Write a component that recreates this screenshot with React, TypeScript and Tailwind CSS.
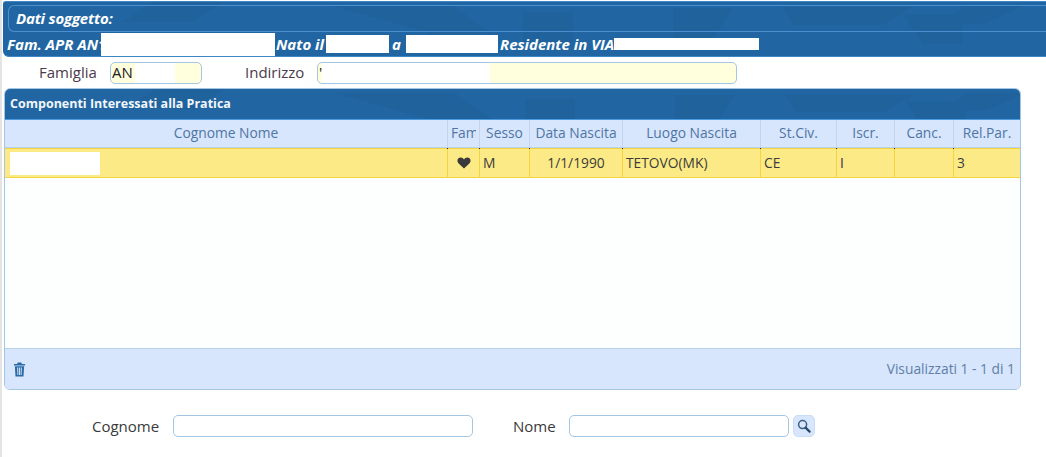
const columns = [
  { label: "Cognome Nome", width: "w-[443px]" },
  { label: "Sesso", width: "w-[50px]" },
  { label: "Data Nascita", width: "w-[93px]" },
  { label: "Luogo Nascita", width: "w-[138px]" },
  { label: "St.Civ.", width: "w-[76px]" },
  { label: "Iscr.", width: "w-[58px]" },
  { label: "Canc.", width: "w-[59px]" },
  { label: "Rel.Par.", width: "flex-1" },
];

const headCell =
  "flex shrink-0 items-center justify-center overflow-hidden whitespace-nowrap border-r border-[#c3d5ee] last:border-r-0";

/** Faint darker shapes that sit behind the blue title bars. */
function BarPattern() {
  return (
    <svg className="absolute inset-0 h-full w-full" aria-hidden>
      <g fill="#1d5a8f" opacity="0.3">
        <path d="M150 0h70l-30 20h-70z" />
        <path d="M330 4h120l40 28h-60z" />
        <path d="M670 6h60l-20 30h-40z" />
        <path d="M780 5h130l-30 18h-90z" />
        <path d="M900 12h60v30h-40z" />
        <path d="M960 4h60l-40 18h-40z" />
        <path d="M520 10h50v30h-50z" />
      </g>
    </svg>
  );
}

function TrashIcon() {
  return (
    <svg width="13" height="15" viewBox="0 0 14 15" preserveAspectRatio="none" aria-hidden>
      <path d="M5 0.6h4l0.6 1.3H13v1.5H1V1.9h3.4z" fill="#2a6ba6" />
      <path
        d="M2 4.2h10l-0.7 10.2H2.7zM4.5 5.6l0.3 7.5h1L5.6 5.6zM6.5 5.6v7.5h1V5.6zM8.4 5.6l-0.2 7.5h1l0.3-7.5z"
        fill="#2a6ba6"
        fillRule="evenodd"
      />
    </svg>
  );
}

function SearchIcon() {
  return (
    <svg width="14" height="14" viewBox="0 0 14 14" aria-hidden>
      <circle cx="5.6" cy="5.6" r="4" fill="none" stroke="#3c5f80" strokeWidth="1.5" />
      <path d="M8.6 8.6l4 4" stroke="#274a6b" strokeWidth="2.2" strokeLinecap="round" />
    </svg>
  );
}

function Cell({ className, children }: { className: string; children?: React.ReactNode }) {
  return (
    <div className={`relative flex h-full shrink-0 items-center border-r border-[#f5d442] ${className}`}>
      {children}
      <span className="absolute right-[-1px] top-[-1px] h-px w-px bg-[#222]" />
    </div>
  );
}

export default function App() {
  return (
    <div className="h-[457px] w-[1046px] overflow-hidden bg-white font-['Open_Sans',sans-serif] text-[14px] text-[#333]">
      <div className="h-full border-l-[2px] border-[#e4e4e4] pt-[1px]">
        {/* Subject heading */}
        <div className="relative ml-[1px] h-[56px] overflow-hidden rounded-bl-[6px] rounded-tl-[3px] border-y border-[#3f86c5] bg-[#2166a2] font-bold italic text-white">
          <BarPattern />
          <div className="relative ml-[5px] mt-[3px] flex h-[27px] items-center rounded-l-[6px] border border-r-0 border-[#4a90d0] pl-[7px] text-[15px] tracking-[-0.2px]">
            Dati soggetto:
          </div>
          <div className="relative flex h-[24px] items-center whitespace-nowrap pl-[4px] text-[15px]">
            <span className="w-[94px] overflow-hidden">Fam. APR AN1</span>
            <span className="h-[23px] w-[174px] bg-white" />
            <span className="ml-[1px] w-[50px]">Nato il</span>
            <span className="h-[18px] w-[63px] bg-white" />
            <span className="ml-[3px] w-[14px]">a</span>
            <span className="h-[18px] w-[92px] bg-white" />
            <span className="ml-[2px] w-[114px]">Residente in VIA</span>
            <span className="h-[12px] w-[145px] bg-white" />
          </div>
        </div>

        {/* Family and address fields */}
        <div className="flex h-[31px] items-center text-[15px]">
          <span className="ml-[37px] w-[71px] text-[#4a3a4a]">Famiglia</span>
          <div className="flex h-[22px] w-[92px] items-center overflow-hidden rounded-[5px] border border-[#a5c6e2] bg-[#fffedd] pl-[1px]">
            <span className="w-[23px] overflow-hidden text-[#222]">AN</span>
            <span className="h-full w-[40px] bg-white" />
          </div>
          <span className="ml-[43px] w-[72px] text-[#4a3a4a]">Indirizzo</span>
          <div className="flex h-[22px] w-[420px] items-center overflow-hidden rounded-[5px] border border-[#a5c6e2] bg-[#fffedd] pl-px">
            <span className="w-[3px] text-[#222]">'</span>
            <span className="h-full w-[168px] bg-white" />
          </div>
        </div>

        {/* Components grid */}
        <div className="ml-[2px] flex h-[302px] w-[1017px] flex-col overflow-hidden rounded-[6px] border border-[#a5c6e2]">
          <div className="relative flex h-[31px] shrink-0 items-center overflow-hidden border-b border-[#4a9be0] bg-[#2166a2] pl-[5px] text-[12.5px] font-bold text-[#f2f6fa]">
            <BarPattern />
            <span className="relative">Componenti Interessati alla Pratica</span>
          </div>
          <div className="flex h-[28px] shrink-0 border-b border-[#b9d2ec] bg-[#d7e5fd] text-[13.8px] text-[#4f76a3]">
            {columns.slice(0, 1).map((col) => (
              <div key={col.label} className={`${col.width} ${headCell}`}>
                {col.label}
              </div>
            ))}
            <div className="flex w-[32px] shrink-0 items-center border-r border-[#c3d5ee] pl-[3px]">
              <span className="w-[25px] overflow-hidden">Fam</span>
            </div>
            {columns.slice(1).map((col) => (
              <div key={col.label} className={`${col.width} ${headCell}`}>
                {col.label}
              </div>
            ))}
          </div>
          <div className="flex h-[30px] shrink-0 border-y border-[#f5d442] bg-[#fbea85] text-[13.8px] text-[#3c3c3c]">
            <Cell className="w-[443px] pl-[5px]">
              <span className="h-[23px] w-[90px] bg-white" />
            </Cell>
            <Cell className="w-[32px] justify-center">
              <svg width="14" height="12" viewBox="0 0 14 12" aria-hidden>
                <path
                  d="M7 11.6L1.4 6.2C-0.4 4.4 0.3 0.6 3.6 0.6 5.2 0.6 6.3 1.5 7 2.6 7.7 1.5 8.8 0.6 10.4 0.6c3.3 0 4 3.8 2.2 5.6z"
                  fill="#3a3a3a"
                />
              </svg>
            </Cell>
            <Cell className="w-[50px] pl-[3px]">M</Cell>
            <Cell className="w-[93px] justify-center">1/1/1990</Cell>
            <Cell className="w-[138px] pl-[3px]">TETOVO(MK)</Cell>
            <Cell className="w-[76px] pl-[3px]">CE</Cell>
            <Cell className="w-[58px] pl-[3px] text-[#4a2a4a]">I</Cell>
            <Cell className="w-[59px]" />
            <div className="flex h-full flex-1 items-center pl-[3px]">3</div>
          </div>
          <div className="flex-1 bg-[#fdfffe]" />
          <div className="flex h-[41px] shrink-0 items-center justify-between border-t border-[#b9d2ec] bg-[#d7e5fd] pl-[8px] pr-[5px] text-[13.8px] text-[#5f7fa6]">
            <TrashIcon />
            <span>Visualizzati 1 - 1 di 1</span>
          </div>
        </div>

        {/* Search row */}
        <div className="mt-[25px] flex h-[22px] items-center text-[15px]">
          <span className="ml-[90px] w-[81px] text-[#3a3a3a]">Cognome</span>
          <div className="h-[22px] w-[300px] rounded-[5px] border border-[#a5c6e2] bg-white" />
          <span className="ml-[40px] w-[56px] text-[#3a3a3a]">Nome</span>
          <div className="h-[22px] w-[220px] rounded-[5px] border border-[#a5c6e2] bg-white" />
          <div className="ml-[4px] flex h-[22px] w-[22px] items-center justify-center rounded-[5px] border border-[#c9dcf5] bg-[#d7e5fd]">
            <SearchIcon />
          </div>
        </div>
      </div>
    </div>
  );
}
